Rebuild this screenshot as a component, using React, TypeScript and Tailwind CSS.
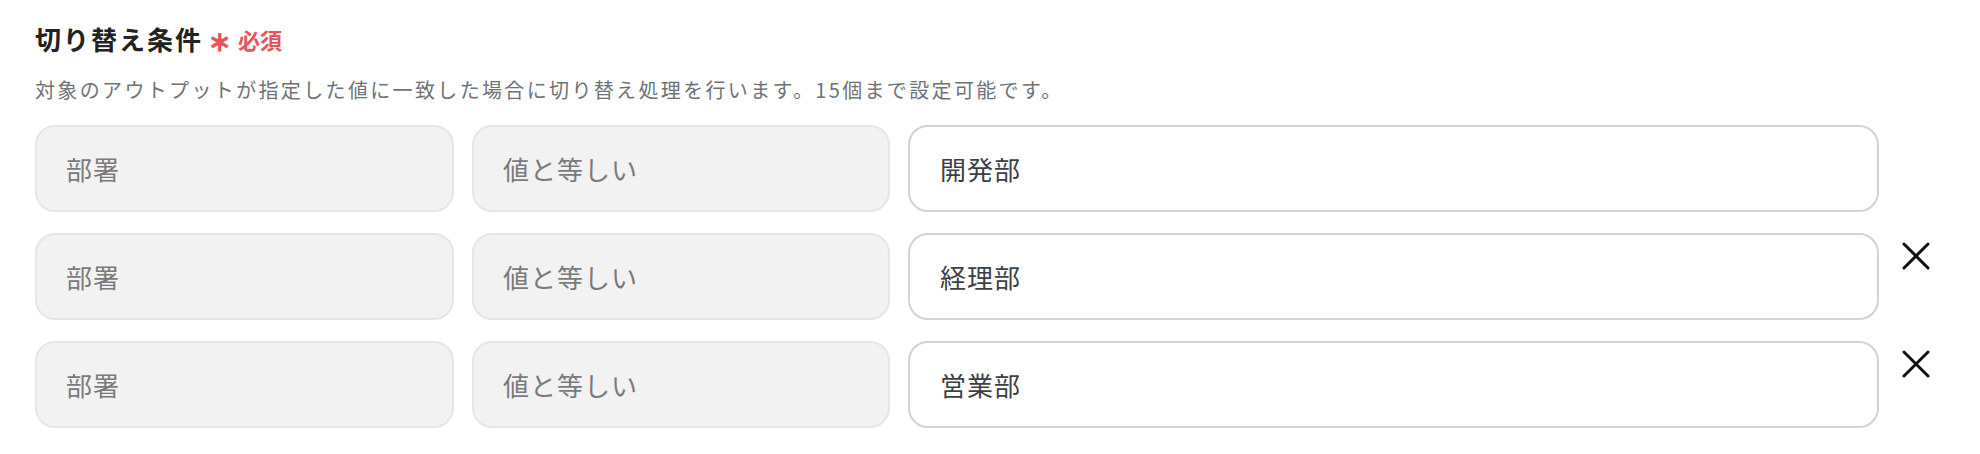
const font = { fontFamily: '"Noto Sans CJK JP", "Noto Sans", sans-serif' };

type Row = { field: string; op: string; value: string; removable: boolean };

const rows: Row[] = [
  { field: '部署', op: '値と等しい', value: '開発部', removable: false },
  { field: '部署', op: '値と等しい', value: '経理部', removable: true },
  { field: '部署', op: '値と等しい', value: '営業部', removable: true },
];

const CloseIcon = () => (
  <svg width="28" height="28" viewBox="0 0 28 28" fill="none">
    <path d="M2 2 L26 26 M26 2 L2 26" stroke="#111" strokeWidth="3" strokeLinecap="round" />
  </svg>
);

const ConditionRow = ({ row }: { row: Row }) => (
  <div className="flex items-start">
    <div className="flex gap-[18px]">
      <div className="w-[419px] h-[87px] flex items-center px-[29px] rounded-[20px] border-2 border-[#e6e6e6] bg-[#f2f2f2] text-[26px] tracking-[1px] text-[#7a7a7a]">
        {row.field}
      </div>
      <div className="w-[418px] h-[87px] flex items-center px-[29px] rounded-[20px] border-2 border-[#e6e6e6] bg-[#f2f2f2] text-[26px] tracking-[1px] text-[#7a7a7a]">
        {row.op}
      </div>
      <div className="w-[971px] h-[87px] flex items-center px-[30px] rounded-[20px] border-2 border-[#cfd4d9] bg-white text-[26px] tracking-[1px] text-[#3d4043]">
        {row.value}
      </div>
    </div>
    {row.removable && (
      <button className="ml-[23px] mt-[9px] p-0">
        <CloseIcon />
      </button>
    )}
  </div>
);

export default function App() {
  return (
    <div className="w-[1980px] h-[454px] bg-white pl-[35px] pt-[21px]" style={font}>
      <div className="flex items-center h-[36px]">
        <h2 className="text-[26px] leading-[36px] font-bold tracking-[2px] text-[#222]">切り替え条件</h2>
        <span className="ml-[5px] text-[28px] font-bold text-[#e8535c] leading-none">∗</span>
        <span className="ml-[7px] text-[22px] font-bold text-[#e8535c]">必須</span>
      </div>
      <p className="mt-[18px] text-[20px] leading-[30px] tracking-[2.35px] text-[#6f7377]">
        対象のアウトプットが指定した値に一致した場合に切り替え処理を行います。15個まで設定可能です。
      </p>
      <div className="mt-[20px] flex flex-col gap-[21px]">
        {rows.map((r, i) => (
          <ConditionRow key={i} row={r} />
        ))}
      </div>
    </div>
  );
}
